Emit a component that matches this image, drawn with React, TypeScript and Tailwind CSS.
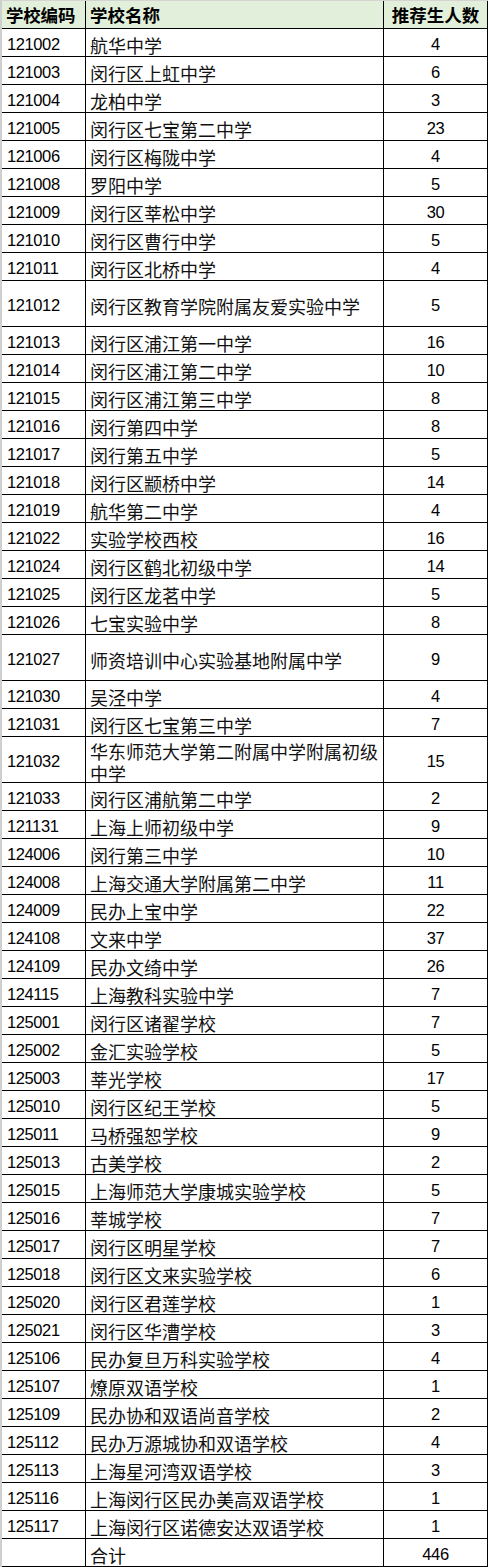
import React from "react";

type Row = [string, string, string, boolean?];

const rows: Row[] = [
  ["121002", "航华中学", "4"],
  ["121003", "闵行区上虹中学", "6"],
  ["121004", "龙柏中学", "3"],
  ["121005", "闵行区七宝第二中学", "23"],
  ["121006", "闵行区梅陇中学", "4"],
  ["121008", "罗阳中学", "5"],
  ["121009", "闵行区莘松中学", "30"],
  ["121010", "闵行区曹行中学", "5"],
  ["121011", "闵行区北桥中学", "4"],
  ["121012", "闵行区教育学院附属友爱实验中学", "5", true],
  ["121013", "闵行区浦江第一中学", "16"],
  ["121014", "闵行区浦江第二中学", "10"],
  ["121015", "闵行区浦江第三中学", "8"],
  ["121016", "闵行第四中学", "8"],
  ["121017", "闵行第五中学", "5"],
  ["121018", "闵行区颛桥中学", "14"],
  ["121019", "航华第二中学", "4"],
  ["121022", "实验学校西校", "16"],
  ["121024", "闵行区鹤北初级中学", "14"],
  ["121025", "闵行区龙茗中学", "5"],
  ["121026", "七宝实验中学", "8"],
  ["121027", "师资培训中心实验基地附属中学", "9", true],
  ["121030", "吴泾中学", "4"],
  ["121031", "闵行区七宝第三中学", "7"],
  ["121032", "华东师范大学第二附属中学附属初级中学", "15", true],
  ["121033", "闵行区浦航第二中学", "2"],
  ["121131", "上海上师初级中学", "9"],
  ["124006", "闵行第三中学", "10"],
  ["124008", "上海交通大学附属第二中学", "11"],
  ["124009", "民办上宝中学", "22"],
  ["124108", "文来中学", "37"],
  ["124109", "民办文绮中学", "26"],
  ["124115", "上海教科实验中学", "7"],
  ["125001", "闵行区诸翟学校", "7"],
  ["125002", "金汇实验学校", "5"],
  ["125003", "莘光学校", "17"],
  ["125010", "闵行区纪王学校", "5"],
  ["125011", "马桥强恕学校", "9"],
  ["125013", "古美学校", "2"],
  ["125015", "上海师范大学康城实验学校", "5"],
  ["125016", "莘城学校", "7"],
  ["125017", "闵行区明星学校", "7"],
  ["125018", "闵行区文来实验学校", "6"],
  ["125020", "闵行区君莲学校", "1"],
  ["125021", "闵行区华漕学校", "3"],
  ["125106", "民办复旦万科实验学校", "4"],
  ["125107", "燎原双语学校", "1"],
  ["125109", "民办协和双语尚音学校", "2"],
  ["125112", "民办万源城协和双语学校", "4"],
  ["125113", "上海星河湾双语学校", "3"],
  ["125116", "上海闵行区民办美高双语学校", "1"],
  ["125117", "上海闵行区诺德安达双语学校", "1"],
  ["", "合计", "446"],
];

const numFont = { fontFamily: '"Liberation Sans", Arial, sans-serif' };

export default function App() {
  return (
    <div className="w-[488px] bg-white text-black border-l-2 border-t border-l-[#cfcfcf] border-t-[#d4d4d4]">
      <div className="grid grid-cols-[84px_298px_104px]">
        <div className="h-[28px] bg-[#e2efda] border-r border-b border-black flex items-center pl-[4px] pt-[2px] text-[17.5px] font-bold tracking-[-0.2px] [font-family:'Noto_Sans_CJK_SC',sans-serif]">
          学校编码
        </div>
        <div className="h-[28px] bg-[#e2efda] border-r border-b border-black flex items-center pl-[4px] pt-[2px] text-[17.5px] font-bold [font-family:'Noto_Sans_CJK_SC',sans-serif]">
          学校名称
        </div>
        <div className="h-[28px] bg-[#e2efda] border-r border-b border-black flex items-center justify-center pt-[2px] text-[17.5px] font-bold [font-family:'Noto_Sans_CJK_SC',sans-serif]">
          推荐生人数
        </div>
        {rows.map(([code, name, count, tall]) => (
          <React.Fragment key={code + name}>
            <div
              className={`${tall ? "h-[46px]" : "h-[28px]"} border-r border-b border-black flex items-center pl-[5px] pt-[3px] text-[16.5px] tracking-[-0.4px]`}
              style={numFont}
            >
              {code}
            </div>
            <div
              className={`${tall ? "h-[46px]" : "h-[28px]"} border-r border-b border-black flex items-center pl-[4px] pt-[5px] text-[18px] leading-[22px] text-[#111] [font-family:'Noto_Sans_CJK_SC',sans-serif]`}
            >
              <span className="block max-w-[289px]">{name}</span>
            </div>
            <div
              className={`${tall ? "h-[46px]" : "h-[28px]"} border-r border-b border-black flex items-center justify-center pt-[3px] text-[16.5px] tracking-[-0.4px]`}
              style={numFont}
            >
              {count}
            </div>
          </React.Fragment>
        ))}
      </div>
    </div>
  );
}
